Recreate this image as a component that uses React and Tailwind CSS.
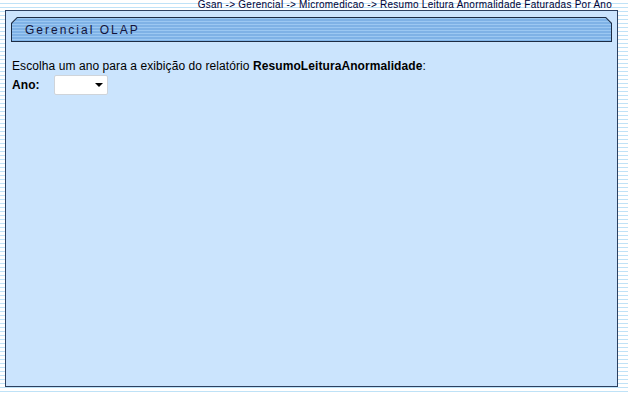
import React from "react";

const stripes =
  "bg-[repeating-linear-gradient(to_bottom,#ffffff_0px,#ffffff_3px,#bfe2f7_3px,#bfe2f7_4px)]";

const App = () => {
  return (
    <div
      className={`w-[628px] h-[395px] overflow-hidden ${stripes} font-['Liberation_Sans',Arial,sans-serif]`}
    >
      {/* breadcrumb */}
      <div className="h-[10px] pr-[16px] text-right text-[10px] leading-[9px] tracking-[0.25px] text-[#000033]">
        Gsan -&gt; Gerencial -&gt; Micromedicao -&gt; Resumo Leitura Anormalidade Faturadas Por Ano
      </div>

      {/* main panel */}
      <div className="ml-[5px] w-[613px] h-[377px] border border-[#2c4060] bg-[#cbe4fd] pt-[6px] px-[5px]">
        {/* header bar */}
        <div className="h-[25px] bg-[#1c2c44] p-px [clip-path:polygon(6px_0,calc(100%-6px)_0,100%_6px,100%_100%,0_100%,0_6px)]">
          <div className="h-full flex items-center pl-[13px] bg-[repeating-linear-gradient(to_bottom,#9cc8f2_0px,#9cc8f2_1px,#7fb2e6_1px,#7fb2e6_3px)] [clip-path:polygon(5.5px_0,calc(100%-5.5px)_0,100%_5.5px,100%_100%,0_100%,0_5.5px)]">
            <span className="text-[12px] tracking-[2px] text-[#14143a] leading-none">
              Gerencial OLAP
            </span>
          </div>
        </div>

        {/* content */}
        <div className="pl-px pt-[17px] text-[12px] text-black tracking-[0.08px]">
          <p className="leading-[14px]">
            Escolha um ano para a exibição do relatório{" "}
            <b>ResumoLeituraAnormalidade</b>:
          </p>
          <div className="flex items-center mt-[2px] h-[20px]">
            <b className="w-[42px] leading-[14px]">Ano:</b>
            <div className="w-[54px] h-[20px] bg-white border border-[#cfd4da] rounded-[2px] flex items-center justify-end pr-[4px]">
              <svg width="8" height="4" viewBox="0 0 8 4">
                <path d="M0 0 L8 0 L4 4 Z" fill="#000" />
              </svg>
            </div>
          </div>
        </div>
      </div>
    </div>
  );
};

export default App;
